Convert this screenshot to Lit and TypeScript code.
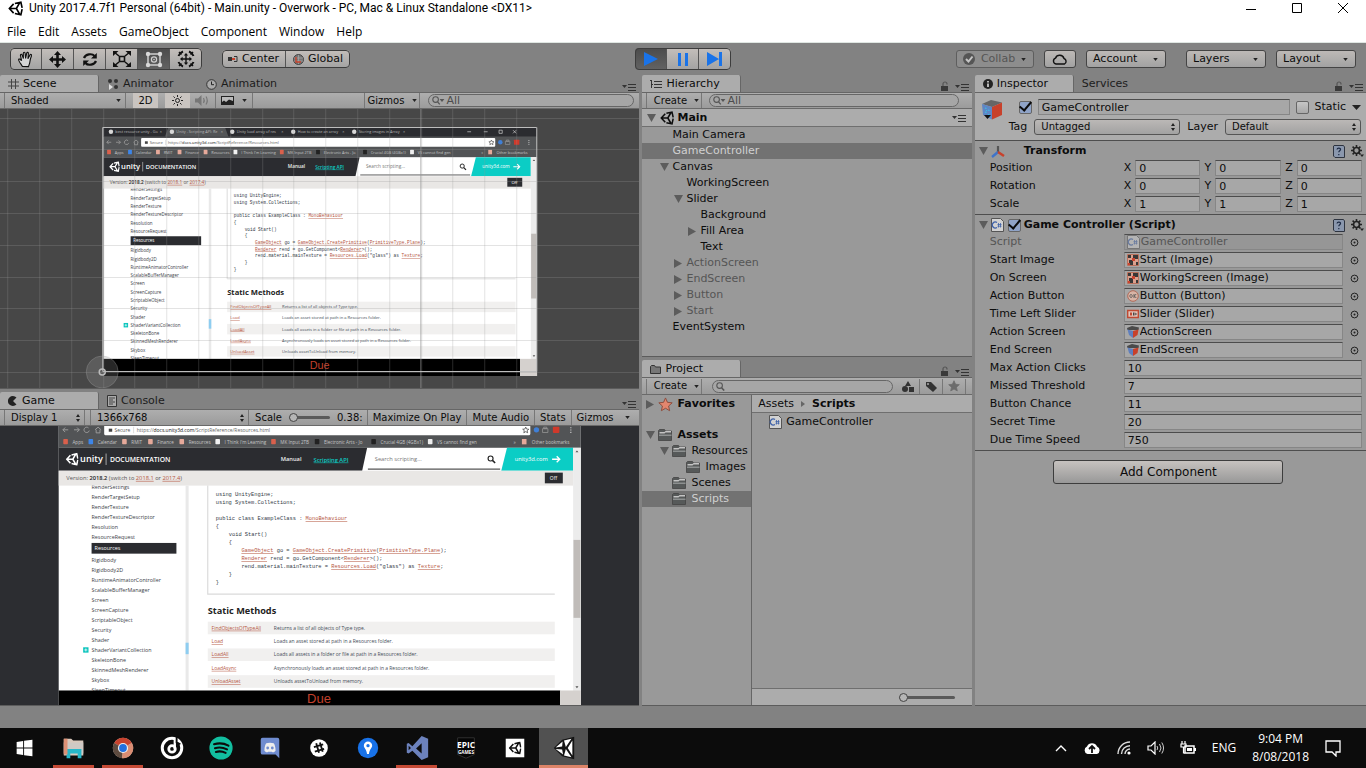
import { LitElement, html, svg, css, nothing } from "lit";
import { customElement } from "lit/decorators.js";
import { classMap } from "lit/directives/class-map.js";

/* ---------- glyphs ---------- */

const unityMark = (size: number) => html`<svg width=${size} height=${size} viewBox="0 0 24 24" fill="none" stroke="currentColor" stroke-width="2.6" aria-hidden="true">
  <path d="M9 4.6 2.2 12 9 19.4M11 4l9.6-2.2 2 9.2M11 20l9.6 2.2 2-9.2M3 12h10.4L18.6 3M13.4 12l5.2 9"/></svg>`;

const unityMarkShape = svg`<path fill="none" stroke="#fff" stroke-width="2.8" d="M9 4.6 2.2 12 9 19.4M11 4l9.6-2.2 2 9.2M11 20l9.6 2.2 2-9.2M3 12h10.4L18.6 3M13.4 12l5.2 9"/>`;

const icon = (w: number, h: number, box: string, body: unknown) =>
  html`<svg width=${w} height=${h} viewBox=${box} aria-hidden="true">${body}</svg>`;

const caret = icon(5, 3, "0 0 6 4", svg`<path d="M0 0h6L3 4z" fill="#222"/>`);
const updown = icon(4, 8, "0 0 4 8", svg`<path d="M0 3 2 0l2 3zM0 5l2 3 2-3z" fill="#222"/>`);
const fold = (open: boolean) =>
  open
    ? icon(9, 8, "0 0 9 8", svg`<path d="M0 0h9L4.5 8z" fill="#5c5c5c"/>`)
    : icon(8, 9, "0 0 8 9", svg`<path d="M0 0v9l8-4.5z" fill="#5c5c5c"/>`);
const lockIcon = icon(9, 10, "0 0 9 10", svg`<path d="M1 5h7v5H1z" fill="#3a3a3a"/><path d="M3 5V3a2 2 0 0 1 4 0v.6" fill="none" stroke="#555" stroke-width="1.2"/>`);
const menuIcon = icon(14, 8, "0 0 14 8", svg`<path d="M0 2h5L2.5 5z" fill="#333"/><path d="M6 1.5h8M6 4.5h8M6 7.5h8" stroke="#333" stroke-width="1.1"/>`);
const glass = icon(13, 9, "0 0 13 9", svg`<circle cx="3.6" cy="3.6" r="2.8" fill="none" stroke="#555" stroke-width="1.1"/><path d="m5.600 5.800 2.200 2.600" stroke="#555" stroke-width="1.3"/><path d="M7.600 3h4.800l-2.400 3z" fill="#555"/>`);
const glassPlain = icon(9, 9, "0 0 9 9", svg`<circle cx="3.6" cy="3.6" r="2.8" fill="none" stroke="#555" stroke-width="1.1"/><path d="m5.600 5.800 2.600 2.800" stroke="#555" stroke-width="1.5"/>`);
const folder = icon(15, 12, "0 0 15 12", svg`<path d="M.5 11.5v-10l1-1h5l1 1.500h6v9.500z" fill="#565959" stroke="#444" stroke-width=".8"/><path d="M1.500 3h5l1-1h5.500v1.500H7.500l-1 1h-5z" fill="#c4c4c4"/><path d="M1 5.500h12.500v1.500H1z" fill="#8d9090"/>`);
const star = (w: number, fill: string, stroke: string) =>
  icon(w, w, "0 0 16 16", svg`<path d="m8 1 2.100 4.700 5 .5-3.800 3.400 1.100 5L8 12l-4.400 2.600 1.100-5L.900 6.200l5-.5z" fill=${fill} stroke=${stroke}/>`);
const scriptIcon = icon(13, 14, "0 0 13 14", svg`<path d="M.5.5h9l3 3v10H.5z" fill="#d2d2d2" stroke="#555"/><path d="M6 4.500a3 3 0 1 0 0 5" fill="none" stroke="#3f62a8" stroke-width="1.3"/><path d="M7.500 5v4.500M9.500 5v4.500M6.500 6.500h4M6.500 8.200h4" stroke="#3f62a8" stroke-width=".8"/>`);
const imageIcon = icon(12, 12, "0 0 12 12", svg`<path d="M.5.5h11v11H.5z" fill="#dba08e" stroke="#b8705c"/><path d="M1 1h3v3H1zM6 1h5v4H6zM2 6h4v5H2zM9 8h2v3H9z" fill="#383838"/><path d="M5 4h3v3H5zM1 9h2v2H1z" fill="#c9432f"/>`);
const okIcon = icon(12, 12, "0 0 12 12", svg`<circle cx="6" cy="6" r="5.3" fill="#d8b4a6" stroke="#b06a58"/><path d="M4 4.500a1.200 1.500 0 1 0 .1 0M7 4v4M9.200 4 7.300 6l2 2" fill="none" stroke="#555" stroke-width=".9"/>`);
const sliderIcon = icon(12, 12, "0 0 12 12", svg`<path d="M.7 2.500h10.600v7H.7z" fill="#e3c4ba" stroke="#bf4a33" stroke-width="1.4"/><path d="M3 4.500h2v3H3z" fill="#bf4a33"/><path d="M6 4.500h1.500v3H6zM8.300 4.500 10 6 8.300 7.500z" fill="#444"/>`);
const shieldCube = icon(12, 12, "0 0 12 12", svg`<path d="M0 2 5 0l7 1.500-.5 2.500H.5z" fill="#4a4a4a"/><path d="m.5 3.500 5.500 1.500v7L2 9z" fill="#5f7fbd"/><path d="m6 5 5.500-1.500L10.500 9 6 12z" fill="#c8412b"/>`);
const cube = icon(22, 22, "0 0 22 22", svg`<path d="m1 5 9-4 11 2.500L11 8z" fill="#666"/><path d="m1 5 10 3v12.500L2 16z" fill="#5f86c4"/><path d="m4 9 1.500.5M7 11l1.500.5M4 13l1.500.5M7 15.500l1.500.5M5 11.500l1 .3" stroke="#35c3e8" stroke-width="1.2"/><path d="m11 8 10-4.500v12.500L11 20.500z" fill="#c8412b"/><path d="M3 16h7l-3.500 4z" fill="#111"/>`);
const helpIcon = icon(12, 13, "0 0 12 13", svg`<path d="M1 .5h9.500l1 1.500v10.500H2L.5 11V1z" fill="#8a97ad" stroke="#2e3440"/><path d="M4 4.500c.3-2 3.800-1.800 3.500.2-.2 1.200-1.700 1.100-1.700 2.600M5.800 9v1.200" fill="none" stroke="#1d2a44" stroke-width="1.2"/>`);
const gearIcon = icon(13, 13, "0 0 13 13", svg`<circle cx="5.5" cy="5.5" r="3" fill="none" stroke="#222" stroke-width="1.7"/><path d="M5.500 0v2M5.500 9v2M0 5.500h2M9 5.500h2M1.600 1.600 3 3M8 8l1.400 1.400M9.400 1.600 8 3M3 8 1.600 9.400" stroke="#222" stroke-width="1.6"/><path d="M9 9.500h4L11 12z" fill="#222"/>`);
const pickIcon = icon(9, 9, "0 0 9 9", svg`<circle cx="4.5" cy="4.5" r="3.4" fill="none" stroke="#222"/><circle cx="4.5" cy="4.5" r="1" fill="#222"/>`);

const toolIcons = [
  icon(18, 17, "0 0 18 17", svg`<path d="M5.500 15.500C4 13 1.500 10 1.600 8.600c.3-1.100 1.700-.5 3 1L3.400 4.200c0-1.300 1.400-1.300 1.700-.2L6.400 7.600 6.300 2.200c.1-1.400 1.700-1.300 1.800 0L8.600 7.400l1.100-5.300c.4-1.200 1.800-.9 1.700.3L10.900 7.800 13 3.900c.7-1 1.900-.4 1.500.8-.9 2.300-1.500 4-1.600 6-.1 2-1 3.300-1.400 4.900z" fill="#d5d5d5" stroke="#111" stroke-width="1.1"/>`),
  icon(17, 17, "0 0 17 17", svg`<path d="M8.500 0 12 4H9.800v3.200H13V5l4 3.500-4 3.500V9.800H9.800V13H12l-3.500 4L5 13h2.200V9.800H4V12L0 8.500 4 5v2.200h3.200V4H5z" fill="#111"/>`),
  icon(16, 15, "0 0 16 15", svg`<path d="M2 6C3.500 2 10 1 12.500 4M14 9C12.500 13 6 14 3.500 11" fill="none" stroke="#111" stroke-width="2.2"/><path d="M14.800 1v5.500H9zM1.200 14V8.500H7z" fill="#111"/>`),
  icon(18, 16, "0 0 18 16", svg`<path d="M6.500 5.500h5v5h-5z" fill="none" stroke="#111" stroke-width="1.6"/><path d="M1 1l5 4M17 1l-5 4M1 15l5-4M17 15l-5-4" stroke="#111" stroke-width="1.6"/><path d="M0 0h5.500L0 5zM18 0h-5.500L18 5zM0 16h5.500L0 11zM18 16h-5.500l5.500-5z" fill="#111"/>`),
  icon(18, 17, "0 0 18 17", svg`<path d="M3 3h12v11H3z" fill="none" stroke="#d0d0d0" stroke-width="1.5"/><circle cx="9" cy="8.5" r="2.6" fill="none" stroke="#d0d0d0" stroke-width="1.2"/><circle cx="9" cy="8.5" r=".8" fill="#d0d0d0"/><g fill="#d8d8d8"><circle cx="3" cy="3" r="2.2"/><circle cx="15" cy="3" r="2.2"/><circle cx="3" cy="14" r="2.2"/><circle cx="15" cy="14" r="2.2"/></g>`),
  icon(18, 18, "0 0 18 18", svg`<path d="M9 3l2.200 2.600H9.700v2.700h2.700V6.800L15 9l-2.600 2.200V9.700H9.700v2.700h1.500L9 15l-2.200-2.600h1.500V9.700H5.600v1.500L3 9l2.600-2.200v1.500h2.700V5.600H6.800z" fill="#111"/><path d="M1.500 6A8 8 0 0 1 6 1.500M12 1.500A8 8 0 0 1 16.500 6M16.500 12a8 8 0 0 1-4.500 4.500M6 16.500A8 8 0 0 1 1.500 12" fill="none" stroke="#111" stroke-width="2"/><path d="m2 2 2.500 2.500M16 2l-2.500 2.500M2 16l2.500-2.500M16 16l-2.500-2.500" stroke="#111" stroke-width="1.6"/>`),
];
const toolNames = ["Hand", "Move", "Rotate", "Scale", "Rect", "Transform"];

/* ---------- the in-game desktop picture, 1366 x 784 units ---------- */

const before = ["RenderSettings", "RenderTargetSetup", "RenderTexture", "RenderTextureDescriptor", "Resolution", "ResourceRequest"];
const after = ["Rigidbody", "Rigidbody2D", "RuntimeAnimatorController", "ScalableBufferManager", "Screen", "ScreenCapture", "ScriptableObject", "Security", "Shader", "ShaderVariantCollection", "SkeletonBone", "SkinnedMeshRenderer", "Skybox", "SleepTimeout"];
const methods = [
  ["FindObjectsOfTypeAll", "Returns a list of all objects of Type type."],
  ["Load", "Loads an asset stored at path in a Resources folder."],
  ["LoadAll", "Loads all assets in a folder or file at path in a Resources folder."],
  ["LoadAsync", "Asynchronously loads an asset stored at path in a Resources folder."],
  ["UnloadAsset", "Unloads assetToUnload from memory."],
];
const bookmarks: [number, string, string][] = [
  [12, "#d9604c", "Apps"], [78, "#3d85e8", "Calendar"], [166, "#e6a99a", "RMIT"], [234, "#e6a99a", "Finance"], [316, "#e6a99a", "Resources"],
  [410, "#f2f2f2", "I Think I'm Learning"], [556, "#d9604c", "MK Input 2TB"], [670, "#222", "Electronic Arts - Jo"], [818, "#222", "Crucial 4GB (4GBx1)"], [966, "#eee", "VS cannot find gen"],
];
const tabs: [number, string][] = [[24, "best resource unity - Go"], [216, "Unity - Scripting API: Re"], [406, "Unity load array of res"], [598, "How to create an array"], [790, "Storing images in Array"]];
const link = (t: string) => svg`<tspan class="lnk">${t}</tspan>`;
const code = [
  svg`using UnityEngine;`, svg`using System.Collections;`, nothing,
  svg`public class ExampleClass : ${link("MonoBehaviour")}`, svg`{`,
  svg`<tspan dx="34">void Start()</tspan>`, svg`<tspan dx="34">{</tspan>`,
  svg`<tspan dx="67" class="lnk">GameObject</tspan> go = ${link("GameObject.CreatePrimitive")}(${link("PrimitiveType.Plane")});`,
  svg`<tspan dx="67" class="lnk">Renderer</tspan> rend = go.GetComponent&lt;${link("Renderer")}&gt;();`,
  svg`<tspan dx="67">rend.material.mainTexture = </tspan>${link("Resources.Load")}("glass") as ${link("Texture")};`,
  svg`<tspan dx="34">}</tspan>`, svg`}`,
];

const tabStrip = () => svg`
  <rect width="1366" height="31" fill="#2b2c30"/>
  <path d="M194 31l10-28h180l10 28z" fill="#535557"/>
  <g class="p12" fill="#b9b9b9">
    ${tabs.map(([x, t]) => svg`<circle cx=${x} cy="15" r="7" fill="#d8d8d8"/><text x=${x + 14} y="19">${t}</text><text x=${x + 154} y="19">×</text>`)}
  </g>
  <g stroke="#ddd" stroke-width="2" fill="none"><path d="M1146 15h12M1198 15h12M1246 10h10v10h-10zM1290 10l10 10M1300 10l-10 10"/></g>`;

const desktopPicture = (withTabs: boolean) => svg`
  <rect width="1366" height="784" fill="#fff"/>
  <rect y="30" width="1366" height="65" fill="#525456"/>
  ${withTabs ? tabStrip() : nothing}
  <g stroke="#9d9d9d" stroke-width="2.5" fill="none"><path d="M25 48H11l6-6M11 48l6 6M40 48h14l-6-6M54 48l-6 6M78 43a7 7 0 1 0 2 7M95 48l8-7 8 7M98 48v8h10v-8"/></g>
  <rect x="119" y="35" width="1115" height="27" rx="3" fill="#fff"/>
  <rect x="131" y="45" width="9" height="8" fill="#444"/>
  <g class="p13"><text x="146" y="53" fill="#555">Secure</text><path d="M196 40v17" stroke="#aaa"/><text x="204" y="53" fill="#666">https://<tspan fill="#111">docs.unity3d.com</tspan>/ScriptReference/Resources.html</text></g>
  <path d="m1222 41 2.300 5 5.700.5-4.300 3.700 1.300 5.500-5-3-5 3 1.300-5.500-4.300-3.700 5.700-.5z" fill="none" stroke="#333" stroke-width="1.8"/>
  <circle cx="1250" cy="48" r="7" fill="#3f7fd6"/><path d="M1266 45h14v10h-14zM1269 41h8v4h-8z" fill="none" stroke="#999" stroke-width="2"/><rect x="1293" y="40" width="17" height="16" rx="2" fill="#d0392b"/><path d="M1340 41v3M1340 47v3M1340 53v3" stroke="#ccc" stroke-width="3"/>
  <g class="p12" fill="#c6c6c6">
    ${bookmarks.map(([x, c, t]) => svg`<rect x=${x} y="72" width="12" height="14" rx="2" fill=${c}/><text x=${x + 24} y="84">${t}</text>`)}
    <text x="1190" y="84">»</text><rect x="1212" y="72" width="12" height="14" fill="#e6a99a"/><text x="1238" y="84">Other bookmarks</text>
  </g>
  <path d="M0 95h807l-13 60H0z" fill="#2b2c30"/>
  <path d="M1173 95h173v60h-188z" fill="#0bcdc5"/>
  <path d="M809 151h346" stroke="#555" stroke-width="3"/>
  <svg x="18" y="108" width="34" height="34" viewBox="0 0 24 24">${unityMarkShape}</svg>
  <text x="56" y="132" class="logo" fill="#fff">unity</text>
  <path d="M124 110v30" stroke="#ccc" stroke-width="2"/>
  <text x="134" y="131" class="p18b" fill="#fff">DOCUMENTATION</text>
  <text x="581" y="130" class="p15b" fill="#eee">Manual</text>
  <text x="667" y="131" class="p15b" fill="#0bcdc5" text-decoration="underline">Scripting API</text>
  <text x="827" y="130" class="p15" fill="#777">Search scripting...</text>
  <circle cx="1130" cy="123" r="6.5" fill="none" stroke="#222" stroke-width="3"/><path d="m1135 128 7 7" stroke="#222" stroke-width="4"/>
  <text x="1193" y="130" class="p15" fill="#fff">unity3d.com</text>
  <path d="M1291 125h20m-8-8 8 8-8 8" fill="none" stroke="#fff" stroke-width="3.5"/>
  <rect x="332" y="194" width="8" height="536" fill="#e9e9e9"/><rect x="332" y="605" width="8" height="30" fill="#8ecdf0"/>
  <g class="p14" fill="#3c4148">
    ${before.map((t, i) => svg`<text x="86" y=${203 + i * 26}>${t}</text>`)}
    <rect x="86" y="344" width="222" height="28" fill="#2b2c30"/><text x="94" y="363" fill="#fff">Resources</text>
    ${after.map((t, i) => svg`<text x="86" y=${395 + i * 26}>${t}</text>`)}
  </g>
  <rect y="155" width="1346" height="39" fill="#e9e7e5"/>
  <text x="20" y="179" class="p15" fill="#555">Version: <tspan fill="#222" font-weight="600">2018.2</tspan> (switch to ${link("2018.1")} or ${link("2017.4")})</text>
  <rect x="1272" y="160" width="47" height="28" fill="#2b2c30"/><text x="1285" y="179" class="p13" fill="#fff">Off</text>
  <rect x="64" y="617" width="14" height="14" fill="#0bc4bd"/><path d="M71 620v8M67 624h8" stroke="#fff" stroke-width="2"/>
  <path d="M390 194v284h908" fill="none" stroke="#dadada" stroke-width="3"/>
  <g class="mono" fill="#333b47">${code.map((l, i) => svg`<text x="411" y=${221 + i * 21}>${l}</text>`)}</g>
  <text x="390" y="529" class="h" fill="#222">Static Methods</text>
  <g class="p13" fill="#444c58">
    ${methods.map(([n, d], i) => svg`${i % 2 ? nothing : svg`<rect x="390" y=${550 + i * 35} width="908" height="33" fill="#f1f0ef"/>`}
      <text x="400" y=${571 + i * 35} class="lnk">${n}</text><text x="563" y=${571 + i * 35}>${d}</text>`)}
  </g>
  <rect x="1346" y="95" width="20" height="689" fill="#ececec"/><rect x="1347" y="336" width="18" height="204" fill="#c0bcb9"/>
  <path d="m1352 107 4-5 4 5zM1352 719l4 5 4-5z" fill="#555"/>
  <rect y="730" width="1312" height="54" fill="#000"/><rect x="1312" y="730" width="54" height="54" fill="#d5d1ce"/>
  <text x="650" y="762" class="due" fill="#c2402c">Due</text>`;

const sceneDrawing = () => {
  const columns = Array.from({ length: 17 }, (_, i) => Math.round(102.5 + (i - 3) * 31.8));
  const rows = Array.from({ length: 9 }, (_, i) => Math.round(371 - i * 31.8));
  return html`<svg class="view" viewBox="0 108 639 279" role="img" aria-label="Scene view">
    <svg x="103" y="126" width="434" height="249" viewBox="0 0 1366 784">${desktopPicture(true)}</svg>
    <g stroke="#969696" stroke-opacity=".27" fill="none">
      ${columns.map((x) => svg`<path d=${`M${x}.5 100v296`}/>`)}
      ${rows.map((y) => svg`<path d=${`M-60 ${y}.5h760`}/>`)}
      <path d="M420.500 100v296" stroke-opacity=".6"/>
    </g>
    <path d="M102.500 126.500h434v244h-434z" fill="none" stroke="#bdbdbd"/>
    <circle cx="102" cy="371" r="16" fill="#9a9a9a" fill-opacity=".25" stroke="#aaa" stroke-opacity=".3"/>
    <circle cx="102" cy="371" r="3" fill="none" stroke="#bbb" stroke-width="1.5"/>
  </svg>`;
};

/* ---------- data ---------- */

interface Node { label: string; level: number; open?: boolean; off?: boolean; selected?: boolean; bold?: boolean }
const hierarchy: Node[] = [
  { label: "Main Camera", level: 0 },
  { label: "GameController", level: 0, selected: true },
  { label: "Canvas", level: 0, open: true },
  { label: "WorkingScreen", level: 1 },
  { label: "Slider", level: 1, open: true },
  { label: "Background", level: 2 },
  { label: "Fill Area", level: 2, open: false },
  { label: "Text", level: 2 },
  { label: "ActionScreen", level: 1, open: false, off: true },
  { label: "EndScreen", level: 1, open: false, off: true },
  { label: "Button", level: 1, open: false, off: true },
  { label: "Start", level: 1, open: false, off: true },
  { label: "EventSystem", level: 0 },
];
const folders: Node[] = [
  { label: "Assets", level: 0, open: true, bold: true },
  { label: "Resources", level: 1, open: true },
  { label: "Images", level: 2 },
  { label: "Scenes", level: 1 },
  { label: "Scripts", level: 1, selected: true },
];
const vectors: [string, string][] = [["Position", "0"], ["Rotation", "0"], ["Scale", "1"]];
const objects: [string, string, unknown, boolean][] = [
  ["Script", "GameController", scriptIcon, true],
  ["Start Image", "Start (Image)", imageIcon, false],
  ["On Screen", "WorkingScreen (Image)", imageIcon, false],
  ["Action Button", "Button (Button)", okIcon, false],
  ["Time Left Slider", "Slider (Slider)", sliderIcon, false],
  ["Action Screen", "ActionScreen", shieldCube, false],
  ["End Screen", "EndScreen", shieldCube, false],
];
const numbers: [string, string][] = [["Max Action Clicks", "10"], ["Missed Threshold", "7"], ["Button Chance", "11"], ["Secret Time", "20"], ["Due Time Speed", "750"]];

const taskIcons: [string, unknown, string][] = [
  ["Start", svg`<path d="M5 7.500l7-1v7H5zM13 6.300l9-1.300v8.500h-9zM5 14.500h7v7l-7-1zM13 14.500h9V23l-9-1.300z" fill="#fff"/>`, ""],
  ["File Explorer", svg`<path d="M3 4h8l2 2h11v16H3z" fill="#d9c9bd"/><path d="M3 8h21v12H3z" fill="#cfc9c4"/><path d="M6 15h16v10h-4v-5h-8v5H6z" fill="#27b7c9"/><path d="M3 4h4v17H3z" fill="#dd9176"/>`, "run"],
  ["Chrome", svg`<circle cx="14" cy="14" r="11" fill="#c9c3bd"/><path d="M14 14 4.500 8.500A11 11 0 0 1 23.500 8.500z" fill="#c8432f"/><path d="M14 14 4.500 8.500A11 11 0 0 0 13 25z" fill="#5e4b3f"/><path d="M14 14l9.500-5.500A11 11 0 0 1 13 25z" fill="#d98d73"/><circle cx="14" cy="14" r="5.5" fill="#eee"/><circle cx="14" cy="14" r="4.2" fill="#2270e0"/>`, "run"],
  ["Player", svg`<circle cx="14" cy="14" r="10.5" fill="none" stroke="#fff" stroke-width="3.2"/><circle cx="14" cy="15" r="3.5" fill="none" stroke="#fff" stroke-width="3"/><path d="M17 15V4" fill="none" stroke="#fff" stroke-width="2.5"/><path d="M19 1v7l4 2" fill="none" stroke="#0c0c0c" stroke-width="2"/>`, ""],
  ["Spotify", svg`<circle cx="14" cy="14" r="12.5" fill="#12bfa0"/><path d="M6.500 10c5-1.500 11-1 15.500 1.500M7.500 14.300c4-1.200 9-.7 13 1.200M8.500 18.200c3.500-1 7.500-.5 10.500 1" fill="none" stroke="#0c0c0c" stroke-width="2.2" stroke-linecap="round"/>`, ""],
  ["Discord", svg`<path d="M6 3h16q2 0 2 2v20l-4-4H6q-2 0-2-2V5q0-2 2-2z" fill="#6f8cd0"/><path d="M8 17c0-4 1-7 2-8 2-1 6-1 8 0 1 1 2 4 2 8-2 2-3 2-4 1h-4c-1 1-2 1-4-1z" fill="#eee"/><circle cx="11.5" cy="14" r="1.5" fill="#6f8cd0"/><circle cx="16.5" cy="14" r="1.5" fill="#6f8cd0"/>`, ""],
  ["Slack", svg`<circle cx="14" cy="14" r="9.5" fill="#fff"/><path d="m11 9 3 10M15 8l3 10M8.500 13l10-3M9.500 18l10-3" stroke="#111" stroke-width="2"/>`, ""],
  ["Maps", svg`<circle cx="14" cy="14" r="11" fill="#1872e8"/><path d="M14 7a4.500 4.500 0 0 1 4.500 4.500c0 2.500-3 3.500-3.500 9h-2c-.5-5.500-3.500-6.500-3.500-9A4.500 4.500 0 0 1 14 7z" fill="#fff"/><circle cx="14" cy="11.5" r="1.8" fill="#1872e8"/>`, ""],
  ["Visual Studio", svg`<path d="m19 1 7 3v20l-7 3L9 17l-4 3-2-1V9.500l2-1L9 12zM19 9 13 14.500l6 5.500zM5 11.500v5l2.500-2.500z" fill="#6c82bd" fill-rule="evenodd"/>`, "run"],
  ["Epic Games", svg`<path d="M5 3h18v18l-9 4-9-4z" fill="#050505" stroke="#333"/><text x="14" y="14" text-anchor="middle" font-size="9" font-weight="700" fill="#fff">EPIC</text><text x="14" y="20" text-anchor="middle" font-size="5" font-weight="700" fill="#fff">GAMES</text>`, ""],
  ["Unity Hub", svg`<path d="M4 4h20v20H4z" fill="#fff"/><svg x="7" y="7" width="14" height="14" viewBox="0 0 24 24"><path fill="none" stroke="#111" stroke-width="2.8" d="M9 4.600 2.200 12 9 19.400M11 4l9.600-2.200 2 9.200M11 20l9.600 2.200 2-9.200M3 12h10.400L18.600 3M13.400 12l5.200 9"/></svg>`, ""],
  ["Unity", svg`<path d="M3 14 12 5 25 2v24l-13-3z" fill="#141414"/><path d="M5 13.500 12.500 7 12 12.500zM5 15l7 .5 1 5.500zM14 6l8-2-6 9zM18 14l5-8v16zM14 22l8 2-6-9z" fill="#fff"/>`, "active"],
];

@customElement("app-root")
export class AppRoot extends LitElement {
  static styles = css`
    :host { display: flex; flex-direction: column; min-height: 100vh; background: #828282; color: #0c0c0c; font: 11px/16px "DejaVu Sans", Verdana, sans-serif; }
    * { box-sizing: border-box; }
    svg { display: block; flex: none; }
    button, input, select { font: inherit; color: inherit; margin: 0; border: 0; padding: 0; background: none; border-radius: 0; min-width: 0; }
    a { color: inherit; text-decoration: none; }
    .grow { flex: 1; min-width: 0; }
    .b { font-weight: 700; }

    .chrome { background: #fff; color: #000; font: 12px/16px "Open Sans", "Noto Sans", sans-serif; border-bottom: 1px solid #dfe6e2; }
    .title { display: flex; align-items: center; height: 16px; padding: 0 16px 0 8px; gap: 6px; font-family: Roboto, "Open Sans", sans-serif; }
    .caps { display: flex; margin-left: auto; gap: 32px; }
    .menu { display: flex; gap: 12px; padding: 8px 7px 2px; }

    .tools { display: grid; grid-template-columns: 1fr auto 1fr; align-items: center; height: 32px; padding: 0 10px; }
    .group { display: flex; gap: 20px; align-items: center; }
    .group.right { justify-content: flex-end; gap: 10px; }
    .group .apart { margin-right: 10px; }
    .seg { display: flex; border-radius: 4px; overflow: hidden; outline: 1px solid #3d3d3d; outline-offset: -1px; }
    .seg button { display: flex; align-items: center; justify-content: center; gap: 4px; height: 22px; width: 32px; background: linear-gradient(#c4bfbb, #a2a2a2); border-right: 1px solid #555; }
    .seg button:last-child { border-right: 0; }
    .seg.wide button { height: 18px; width: 64px; }
    .seg button.on { background: linear-gradient(#4b4b4b, #636363); }
    .pill { display: flex; align-items: center; gap: 4px; justify-content: space-between; width: 80px; height: 18px; padding: 0 7px 0 6px; border: 1px solid #444; border-radius: 3px; background: linear-gradient(#bdb9b6, #a2a2a2); }
    .pill.dim { width: 78px; color: #555; background: #8d8d8d; border-color: #5e5e5e; }
    .pill.cloud { width: 32px; padding: 0; justify-content: center; }

    .dock { flex: 1; display: grid; grid-template-columns: 639fr 329fr 391fr; column-gap: 3px; min-height: 0; margin-bottom: 22px; }
    .col { display: flex; flex-direction: column; gap: 3px; min-width: 0; }
    .panel { display: flex; flex-direction: column; flex: 1 1 0; min-height: 0; border-bottom: 1px solid #5c5c5c; }
    .hier { flex-grow: 282; }
    .proj { flex-grow: 346; }
    .tabs { display: flex; height: 17px; align-items: stretch; }
    .tab { display: flex; align-items: center; gap: 4px; width: 99px; padding: 1px 8px 0; color: #1c1c1c; }
    .tab.on { background: #acacac; border-right: 1px solid #666; border-radius: 2px 2px 0 0; color: #0c0c0c; }
    .opts { display: flex; align-items: flex-end; gap: 6px; margin-left: auto; padding: 0 3px 1px; }
    .bar { display: flex; align-items: center; height: 17px; padding-left: 4px; background: linear-gradient(#aeaeae, #9b9b9b); border-top: 1px solid #666; border-bottom: 1px solid #6a6a6a; font-size: 10px; }
    .proj .bar { height: 18px; }
    .bar button { display: flex; align-items: center; justify-content: center; gap: 8px; height: 15px; border-right: 1px solid #777; padding: 0 5px; }
    .bar button.lit { background: #c9c4c0; border: 0; width: 25px; margin-left: 7px; }
    .bar button.giz { border-left: 1px solid #777; width: 56px; }
    .bar button.gizmenu { gap: 12px; padding-right: 9px; border-right: 0; }
    .bar button.create { border-left: 1px solid #777; width: 56px; gap: 7px; padding-right: 1px; }
    .sel { display: grid; align-items: center; }
    .sel select { grid-area: 1 / 1; appearance: none; width: 100%; padding: 0 12px 0 6px; height: 15px; line-height: 14px; }
    .sel svg { grid-area: 1 / 1; justify-self: end; margin-right: 4px; pointer-events: none; }
    .bar .sel { border-left: 1px solid #777; border-right: 1px solid #777; }
    .shade { width: 122px; }
    .disp { width: 81px; margin-right: 5px; }
    .search { display: flex; align-items: center; height: 13px; border: 1px solid #666; border-radius: 7px; background: #a6a6a6; padding: 0 4px 0 3px; color: #4c4c4c; font-size: 11px; }
    .search input { width: 100%; height: 11px; line-height: 11px; outline: 0; padding-left: 1px; appearance: none; }
    .search input::placeholder { color: #4c4c4c; opacity: 1; }
    .scenefind { display: flex; width: 219px; padding: 0 5px 0 8px; }
    .find { flex: 1; display: flex; padding: 0 13px 0 7px; min-width: 0; }
    .proj .find { padding: 0 4px 0 10px; }
    .scale { display: flex; align-items: center; gap: 7px; padding: 0 4px 0 6px; border-right: 1px solid #777; height: 15px; }
    .end { width: 6px; }
    .sceneview { flex: 1; min-height: 0; background: #474747; overflow: hidden; display: flex; }
    .gameview { flex: 1; min-height: 0; background: #2c2d31; overflow: hidden; display: flex; }
    .view { width: 100%; height: 100%; }

    .view text { font-family: "Open Sans", "Noto Sans", sans-serif; white-space: pre; }
    .p12 text { font-size: 12px; }
    .p13 text, text.p13 { font-size: 13px; }
    .p14 text { font-size: 14px; }
    .view text.p15 { font-size: 15px; }
    .view text.p15b { font-size: 15px; font-weight: 600; }
    .view text.p18b { font-size: 18px; font-weight: 600; }
    .view text.h { font-size: 24px; font-weight: 700; }
    .view text.logo { font-size: 24px; font-weight: 600; }
    .view text.due { font-family: "Liberation Sans", Arial, sans-serif; font-size: 34px; }
    .view .mono text { font-family: "Liberation Mono", "DejaVu Sans Mono", monospace; font-size: 14px; }
    .lnk { fill: #b5563f; text-decoration: underline; }

    .range { appearance: none; width: 41px; height: 12px; }
    .range::-webkit-slider-runnable-track { height: 3px; background: #5a5a5a; border-radius: 2px; }
    .range::-webkit-slider-thumb { appearance: none; width: 9px; height: 9px; margin-top: -3px; border-radius: 50%; border: 1px solid #444; background: #b5b5b5; }
    .range.long { width: 56px; }

    .body { flex: 1; min-height: 0; background: #999; }
    .scene-row { display: flex; align-items: center; height: 18px; background: #acacac; border-bottom: 1px solid #6f6f6f; padding: 0 6px 0 3px; gap: 3px; }
    .tree { list-style: none; margin: 0; padding: 0; }
    .node { display: flex; align-items: center; height: 16px; gap: 2px; }
    .node.l0 { padding-left: 16px; }
    .node.l1 { padding-left: 30px; }
    .node.l2 { padding-left: 44px; }
    .files .node.l0 { padding-left: 2px; }
    .files .node.l1 { padding-left: 16px; }
    .files .node.l2 { padding-left: 30px; }
    .node.off { color: #555; }
    .node.selected { background: #727272; color: #d0d0d0; }
    .slot { display: flex; justify-content: center; width: 12px; flex: none; }
    .files .label { margin-left: 2px; }
    .split { flex: 1; display: grid; grid-template-columns: 1fr 2fr; min-height: 0; background: #999; }
    .files { border-right: 1px solid #666; min-width: 0; overflow: hidden; padding-top: 1px; }
    .fav { margin-bottom: 15px; }
    .pane { display: flex; flex-direction: column; min-width: 0; }
    .crumbs { display: flex; align-items: center; gap: 7px; height: 18px; padding: 0 6px; background: #acacac; border-bottom: 1px solid #6f6f6f; }
    .asset { display: flex; align-items: center; gap: 4px; height: 18px; padding-left: 17px; }
    .foot { display: flex; justify-content: flex-end; height: 17px; align-items: center; padding-right: 17px; margin-top: auto; border-top: 1px solid #6f6f6f; background: #acacac; }

    .insp { background: #999; flex: 1; }
    .head { display: flex; gap: 16px; padding: 6px 5px 5px 6px; background: #acacac; border-top: 1px solid #666; }
    .head .tabbed { flex: 1; display: grid; gap: 4px; }
    .line { display: flex; align-items: center; gap: 6px; }
    .line.tags { margin-left: -10px; gap: 7px; }
    .text, .field { height: 16px; background: #a7a7a7; border: 1px solid #868686; border-top-color: #4c4c4c; padding: 0 3px; line-height: 14px; width: 100%; }
    .line .text { flex: 1; }
    input[type="checkbox"] { appearance: none; width: 13px; height: 13px; flex: none; border: 1px solid #666; border-radius: 2px; background: linear-gradient(#c6c6c6, #a8a8a8); display: grid; place-items: center; }
    input[type="checkbox"]:checked { background: #8fa3c7; }
    input[type="checkbox"]:checked::after { content: ""; width: 5px; height: 10px; border: solid #0a0a0a; border-width: 0 2px 2px 0; transform: rotate(40deg); margin-top: -4px; }
    .pop { border: 1px solid #555; border-radius: 3px; background: linear-gradient(#bbb8b6, #a2a2a2); font-size: 10px; }
    .pop select { height: 14px; }
    .tagsel { width: 146px; }
    .comp { border-top: 1px solid #4e4e4e; padding: 0 4px 1px; }
    .ctitle { display: flex; align-items: center; height: 18px; padding-top: 2px; gap: 3px; }
    .ctitle .slot { width: 9px; }
    .ctitle .mark { width: 14px; display: flex; justify-content: center; }
    .ctitle .none { width: 13px; }
    .ctitle h2 { font-size: 11px; line-height: 16px; margin: 0; }
    .ctitle .acts { display: flex; gap: 6px; margin-left: auto; margin-right: -2px; }
    .prop { display: grid; grid-template-columns: 134px 1fr; align-items: center; height: 18px; padding-left: 11px; }
    .prop.dim { color: #555; }
    .xyz { display: grid; grid-template-columns: 1fr 1fr 1fr; gap: 4px; }
    .xyz label { display: flex; align-items: center; gap: 4px; }
    .obj { display: flex; align-items: center; gap: 7px; padding-right: 3px; }
    .field { display: flex; align-items: center; gap: 1px; padding: 0 2px; }
    .field input { width: 100%; height: 14px; }
    .dim .field { background: #969696; }
    .dim .field svg { opacity: .5; }
    .addrow { border-top: 1px solid #4e4e4e; display: flex; justify-content: center; padding: 9px 4px 9px 0; }
    .add { width: 230px; height: 24px; font-size: 12px; border: 1px solid #3d3d3d; border-radius: 3px; background: linear-gradient(#c6c2bf, #989898); }

    .task { display: flex; height: 40px; background: #0c0c0c; color: #fff; font: 12px/18px "Open Sans", "Noto Sans", sans-serif; }
    .task button { width: 49px; height: 40px; display: grid; place-items: center; border-bottom: 3px solid transparent; padding-top: 3px; }
    .task button.run { border-image: linear-gradient(90deg, transparent 9%, #c54a35 9% 91%, transparent 91%) 1; }
    .task button.active { background: #515151; border-bottom-color: #dd8468; }
    .tray { display: flex; align-items: center; margin-left: auto; gap: 16px; padding-right: 25px; }
    .clock { text-align: center; }
  `;

  private opts(lock: boolean) {
    return html`<div class="opts">${lock ? lockIcon : nothing}${menuIcon}</div>`;
  }

  private select(name: string, value: string, glyph: unknown, cls = "", id = "") {
    return html`<div class="sel ${cls}"><select id=${id || nothing} aria-label=${name}><option>${value}</option></select>${glyph}</div>`;
  }

  private search(label: string, placeholder: string, glyph: unknown) {
    return html`<label class="search grow">${glyph}<input type="search" aria-label=${label} placeholder=${placeholder} /></label>`;
  }

  private tree(nodes: Node[], withFolder: boolean) {
    return html`<ul class="tree">
      ${nodes.map((n) => html`<li class=${classMap({ node: true, [`l${n.level}`]: true, off: !!n.off, selected: !!n.selected, b: !!n.bold })}>
        <span class="slot">${n.open === undefined ? nothing : fold(n.open)}</span>
        ${withFolder ? folder : nothing}<span class="label">${n.label}</span></li>`)}
    </ul>`;
  }

  private toolbar() {
    return html`<div class="tools">
      <div class="group">
        <div class="seg">${toolIcons.map((t, i) => html`<button class=${i === 4 ? "on" : ""} aria-label=${toolNames[i]}>${t}</button>`)}</div>
        <div class="seg wide">
          <button>${icon(10, 8, "0 0 10 8", svg`<path d="M0 2h4v4H0z" fill="#333"/><path d="M4 4h3" stroke="#c8412b" stroke-width="2"/><path d="M6 1.500h3v5H6" fill="none" stroke="#333"/>`)}Center</button>
          <button>${icon(11, 11, "0 0 11 11", svg`<circle cx="5.5" cy="5.5" r="5" fill="#777" stroke="#444"/><path d="M1 4h9M1 7h9M5.500 1v9" stroke="#aaa" stroke-width=".7"/><path d="M3 3v5h5" fill="none" stroke="#c8412b" stroke-width="1.4"/>`)}Global</button>
        </div>
      </div>
      <div class="seg">
        <button class="on" aria-label="Play">${icon(16, 14, "0 0 16 14", svg`<path d="M1 0v14l14-7z" fill="#1a73e8"/>`)}</button>
        <button aria-label="Pause">${icon(10, 13, "0 0 10 13", svg`<path d="M0 0h3v13H0zM7 0h3v13H7z" fill="#1a73e8"/>`)}</button>
        <button aria-label="Step">${icon(16, 14, "0 0 16 14", svg`<path d="M0 0v14l12-7zM12 0h3v14h-3z" fill="#1a73e8"/>`)}</button>
      </div>
      <div class="group right">
        <button class="pill dim">${icon(12, 12, "0 0 12 12", svg`<circle cx="6" cy="6" r="6" fill="#555"/><path d="m3 6 2.500 2.500L9.500 3.500" stroke="#c4c4c4" stroke-width="2" fill="none"/>`)}Collab${caret}</button>
        <button class="pill cloud" aria-label="Cloud">${icon(16, 11, "0 0 16 11", svg`<path d="M4 10a3 3 0 0 1-.5-5.800A4.500 4.500 0 0 1 12 4.500 3 3 0 0 1 12.500 10z" fill="none" stroke="#111" stroke-width="1.4"/>`)}</button>
        <button class="pill apart">Account${caret}</button>
        <button class="pill">Layers${caret}</button><button class="pill">Layout${caret}</button>
      </div>
    </div>`;
  }

  private scenePanel() {
    return html`<section class="panel">
      <div class="tabs">
        <div class="tab on">${icon(11, 10, "0 0 11 10", svg`<path d="M3.500 0v10M7.500 0v10M0 3h11M0 7h11" stroke="#444"/>`)}Scene</div>
        <div class="tab">${icon(12, 12, "0 0 12 12", svg`<g fill="#333"><circle cx="3" cy="3" r="2"/><circle cx="9" cy="3" r="2"/><circle cx="9" cy="9" r="2"/></g><path d="M2 6v6l4-3z" fill="#ddd"/>`)}Animator</div>
        <div class="tab">${icon(11, 11, "0 0 11 11", svg`<circle cx="5.5" cy="5.5" r="4.8" fill="#aaa" stroke="#333"/><path d="M5.500 2.500v3.200H8" fill="none" stroke="#222"/>`)}Animation</div>
        ${this.opts(false)}
      </div>
      <div class="bar">
        ${this.select("Draw mode", "Shaded", caret, "shade")}
        <button class="lit">2D</button>
        <button class="lit" aria-label="Lighting">${icon(11, 11, "0 0 11 11", svg`<circle cx="5.5" cy="5.5" r="2" fill="none" stroke="#222"/><path d="M5.500 0v2M5.500 9v2M0 5.500h2M9 5.500h2M1.500 1.500l1.400 1.400M8 8l1.500 1.500M9.500 1.500 8 3M3 8 1.500 9.500" stroke="#222"/>`)}</button>
        <button aria-label="Audio">${icon(15, 11, "0 0 15 11", svg`<path d="M0 3.500h3L6.500 0v11L3 7.500H0z" fill="#777"/><path d="M8.500 3q1.500 2.500 0 5M11 1.500q2.500 4 0 8" fill="none" stroke="#777" stroke-width="1.2"/>`)}</button>
        <button aria-label="Effects">${icon(13, 9, "0 0 13 9", svg`<path d="M0 0h13v9H0z" fill="#222"/><path d="M1 1h11v4L8 3.500 5 6 3 4.500 1 6z" fill="#bbb"/>`)}${caret}</button>
        <span class="grow"></span>
        <button class="giz">Gizmos ${caret}</button>
        <div class="scenefind">${this.search("Search scene", "All", glass)}</div>
      </div>
      <div class="sceneview">${sceneDrawing()}</div>
    </section>`;
  }

  private gamePanel() {
    return html`<section class="panel">
      <div class="tabs">
        <div class="tab on">${icon(10, 10, "0 0 10 10", svg`<path d="M8.500 1.500A5 5 0 1 0 8.500 8.500L5 5z" fill="#222"/>`)}Game</div>
        <div class="tab">${icon(10, 12, "0 0 10 12", svg`<path d="M.5.5h9v11h-9z" fill="#aaa" stroke="#333"/><path d="M2 3h6M2 5h4M2 7h6M2 9h4" stroke="#444"/>`)}Console</div>
        ${this.opts(false)}
      </div>
      <div class="bar">
        ${this.select("Display", "Display 1", updown, "disp")}
        <div class="grow">${this.select("Resolution", "1366x768", updown)}</div>
        <label class="scale">Scale <input class="range" type="range" min="0" max="100" value="0" /><span>0.38:</span></label>
        <button>Maximize On Play</button><button>Mute Audio</button><button>Stats</button><button class="gizmenu">Gizmos ${caret}</button>
      </div>
      <div class="gameview"><svg class="view" viewBox="0 38 1366 730" role="img" aria-label="Game view">${desktopPicture(false)}</svg></div>
    </section>`;
  }

  private hierarchyPanel() {
    return html`<section class="panel hier">
      <div class="tabs">
        <div class="tab on">${icon(12, 9, "0 0 12 9", svg`<path d="M0 .5h2M4 1.500h8M4 4.500h8M4 7.500h8M1.500 1v7M1.500 4.500H3" stroke="#333" fill="none"/>`)}Hierarchy</div>
        ${this.opts(true)}
      </div>
      <div class="bar"><button class="create">Create ${caret}</button><div class="find">${this.search("Search hierarchy", "All", glass)}</div></div>
      <div class="body">
        <div class="scene-row"><span class="slot">${fold(true)}</span>${unityMark(14)}<span class="b grow">Main</span>${menuIcon}</div>
        ${this.tree(hierarchy, false)}
      </div>
    </section>`;
  }

  private projectPanel() {
    return html`<section class="panel proj">
      <div class="tabs"><div class="tab on">${icon(11, 9, "0 0 11 9", svg`<path d="M.5 8.500v-7l1-1h3l1 1.500h5v6.500z" fill="#777" stroke="#333"/>`)}Project</div>${this.opts(true)}</div>
      <div class="bar">
        <button class="create">Create ${caret}</button><div class="find">${this.search("Search assets", "", glassPlain)}</div>
        <button aria-label="By type">${icon(12, 11, "0 0 12 11", svg`<circle cx="3" cy="8" r="3" fill="#333"/><path d="M6 0l3 5H3zM7 6h5v5H7z" fill="#333"/>`)}</button>
        <button aria-label="By label">${icon(12, 11, "0 0 12 11", svg`<path d="M1 1h5l6 6-4 4-7-6z" fill="#333"/><circle cx="3" cy="3" r="1" fill="#aaa"/>`)}</button>
        <button aria-label="Save search">${star(12, "#6c6c6c", "#6c6c6c")}</button>
        <span class="end"></span>
      </div>
      <div class="split">
        <div class="files">
          <div class="node l0 b fav"><span class="slot">${fold(false)}</span>${star(15, "#e2866e", "#8a4b3c")}<span class="label">Favorites</span></div>
          ${this.tree(folders, true)}
        </div>
        <div class="pane">
          <div class="crumbs">Assets ${icon(4, 6, "0 0 4 6", svg`<path d="M0 0v6l4-3z" fill="#666"/>`)} <span class="b">Scripts</span></div>
          <div class="asset">${scriptIcon}GameController</div>
          <div class="foot"><input class="range long" type="range" min="0" max="100" value="0" aria-label="Icon size" /></div>
        </div>
      </div>
    </section>`;
  }

  private inspector() {
    return html`<section class="panel">
      <div class="tabs">
        <div class="tab on">${icon(10, 10, "0 0 10 10", svg`<circle cx="5" cy="5" r="5" fill="#222"/><path d="M5 2v1.500M5 4.500V8" stroke="#ddd" stroke-width="1.6"/>`)}Inspector</div>
        <div class="tab">Services</div>${this.opts(true)}
      </div>
      <div class="insp">
        <div class="head">
          ${cube}
          <div class="tabbed">
            <div class="line"><input type="checkbox" checked aria-label="Active" /><input class="text" aria-label="Name" value="GameController" />
              <input type="checkbox" id="static" /><label for="static">Static</label>${icon(9, 5, "0 0 9 5", svg`<path d="M0 0h9L4.500 5z" fill="#222"/>`)}</div>
            <div class="line tags"><label for="tag">Tag</label>${this.select("Tag", "Untagged", updown, "pop tagsel", "tag")}
              <label for="layer">Layer</label>${this.select("Layer", "Default", updown, "pop grow", "layer")}</div>
          </div>
        </div>
        <div class="comp">
          <div class="ctitle"><span class="slot">${fold(true)}</span><span class="mark">${icon(14, 13, "0 0 14 13", svg`<path d="M7 7V1" stroke="#555" stroke-width="2.2"/><path d="m7 7-6 5" stroke="#3f74c9" stroke-width="2.4"/><path d="m7 7 6 4" stroke="#c8412b" stroke-width="2.4"/>`)}</span><span class="none"></span>
            <h2>Transform</h2><span class="acts">${helpIcon}${gearIcon}</span></div>
          ${vectors.map(([n, v]) => html`<div class="prop"><span>${n}</span><div class="xyz">
            ${["X", "Y", "Z"].map((a) => html`<label>${a}<input class="text" value=${v} aria-label=${`${n} ${a}`} /></label>`)}</div></div>`)}
        </div>
        <div class="comp">
          <div class="ctitle"><span class="slot">${fold(true)}</span><span class="mark">${scriptIcon}</span><input type="checkbox" checked aria-label="Enabled" />
            <h2>Game Controller (Script)</h2><span class="acts">${helpIcon}${gearIcon}</span></div>
          ${objects.map(([n, v, g, dim], i) => html`<div class=${dim ? "prop dim" : "prop"}><label for=${`o${i}`}>${n}</label>
            <div class="obj"><div class="field">${g}<input id=${`o${i}`} readonly value=${v} /></div>${pickIcon}</div></div>`)}
          ${numbers.map(([n, v], i) => html`<div class="prop"><label for=${`n${i}`}>${n}</label><input class="text" id=${`n${i}`} value=${v} /></div>`)}
        </div>
        <div class="addrow"><button class="add">Add Component</button></div>
      </div>
    </section>`;
  }

  private taskbar() {
    return html`<footer class="task">
      ${taskIcons.map(([n, g, c]) => html`<button class=${c} aria-label=${n}>${icon(26, 26, "0 0 28 28", g)}</button>`)}
      <div class="tray">
        ${icon(12, 7, "0 0 12 7", svg`<path d="m1 6 5-5 5 5" fill="none" stroke="#fff" stroke-width="1.4"/>`)}
        ${icon(18, 13, "0 0 18 13", svg`<path d="M4.500 12A4 4 0 0 1 4 4.500 5.500 5.500 0 0 1 14 4.500 4 4 0 0 1 14 12z" fill="#fff"/><path d="M9 4v7M6 7l3-3 3 3" fill="none" stroke="#111" stroke-width="1.8"/>`)}
        ${icon(14, 14, "0 0 14 14", svg`<path d="M1 13A12 12 0 0 1 13 1M4.500 13A8.500 8.500 0 0 1 13 4.700M8 13a5 5 0 0 1 5-5" fill="none" stroke="#ddd" stroke-width="1.4"/><circle cx="12" cy="12" r="1.6" fill="#fff"/>`)}
        ${icon(17, 14, "0 0 17 14", svg`<path d="M1 5h3l4-4v12L4 9H1z" fill="none" stroke="#fff" stroke-width="1.2"/><path d="M10 5q1.500 2 0 4M12.500 3q3 4 0 8M14.800 1.500q3.500 5.500 0 11" fill="none" stroke="#ccc"/>`)}
        ${icon(16, 14, "0 0 16 14", svg`<path d="M5 5h9v7H5z" fill="none" stroke="#fff" stroke-width="1.5"/><path d="M14 7h2v3h-2zM7 7h5v3H7z" fill="#fff"/><path d="M1 3h5v3H1zM2 0v3M5 0v3M3.500 6v6H5" fill="none" stroke="#fff" stroke-width="1.2"/>`)}
        <span>ENG</span>
        <span class="clock">9:04 PM<br />8/08/2018</span>
        ${icon(16, 17, "0 0 16 17", svg`<path d="M1 1h14v11h-4v4l-4-4H1z" fill="none" stroke="#fff" stroke-width="1.3"/>`)}
      </div>
    </footer>`;
  }

  render() {
    return html`
      <header class="chrome">
        <div class="title">${unityMark(15)}<span>Unity 2017.4.7f1 Personal (64bit) - Main.unity - Overwork - PC, Mac &amp; Linux Standalone &lt;DX11&gt;</span>
          <span class="caps">
            ${icon(14, 12, "0 0 14 12", svg`<path d="M2 7.500h10" stroke="#000"/>`)}
            ${icon(14, 12, "0 0 14 12", svg`<path d="M2.500 1.500h9v9h-9z" fill="none" stroke="#000"/>`)}
            ${icon(14, 12, "0 0 14 12", svg`<path d="m2 1 10 10M12 1 2 11" stroke="#000"/>`)}
          </span></div>
        <nav class="menu">${["File", "Edit", "Assets", "GameObject", "Component", "Window", "Help"].map((m) => html`<a href="#">${m}</a>`)}</nav>
      </header>
      ${this.toolbar()}
      <main class="dock">
        <div class="col">${this.scenePanel()}${this.gamePanel()}</div>
        <div class="col">${this.hierarchyPanel()}${this.projectPanel()}</div>
        <div class="col">${this.inspector()}</div>
      </main>
      ${this.taskbar()}`;
  }
}
